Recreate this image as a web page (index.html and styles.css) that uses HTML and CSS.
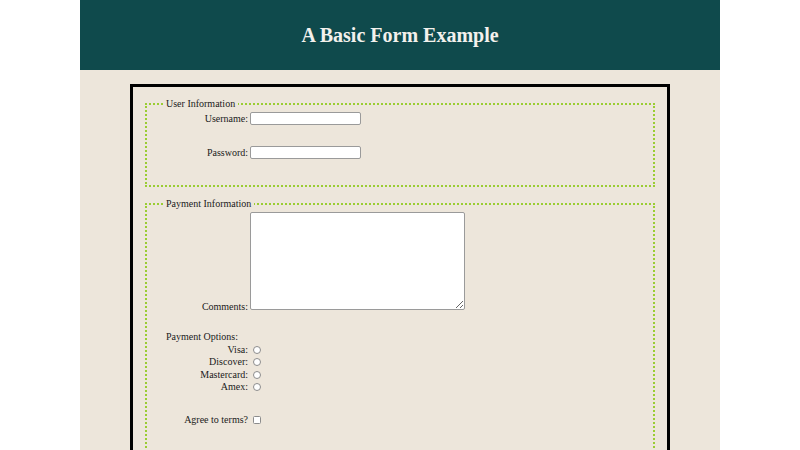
FILE: index.html
```html
<!DOCTYPE html>
<html lang="en">
<head>
  <meta charset="utf-8">
  <title>A Basic Form Example</title>
  <link rel="stylesheet" href="styles.css">
</head>
<body>
  <div class="page">
    <header class="banner">
      <h1 class="title">A Basic Form Example</h1>
    </header>
    <main class="content">
      <form class="signup">
        <fieldset class="group group-user">
          <legend class="group-title">User Information</legend>
          <div class="row">
            <label class="field-label" for="username">Username:</label>
            <input class="text-input" id="username" type="text">
          </div>
          <div class="row">
            <label class="field-label" for="password">Password:</label>
            <input class="text-input" id="password" type="password">
          </div>
        </fieldset>

        <fieldset class="group group-payment">
          <legend class="group-title">Payment Information</legend>
          <div class="area-row">
            <label class="field-label" for="comments">Comments:</label>
            <textarea class="text-area" id="comments"></textarea>
          </div>

          <div class="options-heading">Payment Options:</div>
          <div class="option">
            <label class="field-label" for="visa">Visa:</label>
            <input class="radio" id="visa" type="radio" name="card">
          </div>
          <div class="option">
            <label class="field-label" for="discover">Discover:</label>
            <input class="radio" id="discover" type="radio" name="card">
          </div>
          <div class="option">
            <label class="field-label" for="mastercard">Mastercard:</label>
            <input class="radio" id="mastercard" type="radio" name="card">
          </div>
          <div class="option">
            <label class="field-label" for="amex">Amex:</label>
            <input class="radio" id="amex" type="radio" name="card">
          </div>

          <div class="option terms">
            <label class="field-label" for="agree">Agree to terms?</label>
            <input class="checkbox" id="agree" type="checkbox">
          </div>
        </fieldset>
      </form>
    </main>
  </div>
</body>
</html>
```

FILE: styles.css
```css
html, body {
  margin: 0;
  padding: 0;
  background: #ffffff;
}

body {
  font-family: "Liberation Serif", "Times New Roman", serif;
  font-size: 10px;
  color: #1a1a1a;
}

.page {
  width: 640px;
  margin: 0 auto;
  background: #ede6db;
  min-height: 100vh;
}

/* top banner */
.banner {
  height: 70px;
  background: #0f4a4c;
  display: flex;
  align-items: center;
  justify-content: center;
}

.title {
  margin: 0;
  font-size: 20px;
  font-weight: bold;
  color: #f3f1ec;
}

/* form frame */
.content {
  padding: 14px 50px 0;
}

.signup {
  border: 3px solid #000;
  border-bottom: none;
  padding: 10px 10px 0;
  min-height: 400px;
}

.group {
  margin: 0 2px 10px;
  padding: 2px 10px 5px 16px;
  border: 2px dotted #9acd32;
  min-width: 0;
}

.group-payment {
  padding-bottom: 40px;
}

.group-title {
  padding: 0 3px;
  line-height: 13px;
  font-size: 10px;
}

/* label + control rows */
.row {
  display: flex;
  align-items: center;
  gap: 2px;
  margin-bottom: 21px;
}

.field-label {
  width: 85px;
  flex: none;
  text-align: right;
  line-height: 12px;
}

.text-input {
  box-sizing: border-box;
  width: 111px;
  height: 13px;
  margin: 0;
  padding: 0 2px;
  border: 1px solid #9a9a9a;
  border-radius: 2px;
  background: #fff;
  font: inherit;
}

.area-row {
  line-height: 12px;
}

.area-row .field-label {
  display: inline-block;
}

.text-area {
  box-sizing: border-box;
  width: 215px;
  height: 98px;
  margin: 0 0 0 -1px;
  padding: 1px;
  border: 1px solid #9a9a9a;
  border-radius: 2px;
  background: #fff;
  font: inherit;
  vertical-align: baseline;
}

.options-heading {
  margin-top: 18px;
  padding-left: 3px;
  line-height: 12.5px;
}

.option {
  display: flex;
  align-items: center;
  height: 12.5px;
}

.radio,
.checkbox {
  appearance: none;
  -webkit-appearance: none;
  box-sizing: border-box;
  width: 8px;
  height: 8px;
  margin: 0 0 0 5px;
  border: 1px solid #8c8c8c;
  background: #fff;
  flex: none;
}

.radio {
  border-radius: 50%;
}

.checkbox {
  border-radius: 1.5px;
}

.terms {
  margin-top: 20px;
}
```
